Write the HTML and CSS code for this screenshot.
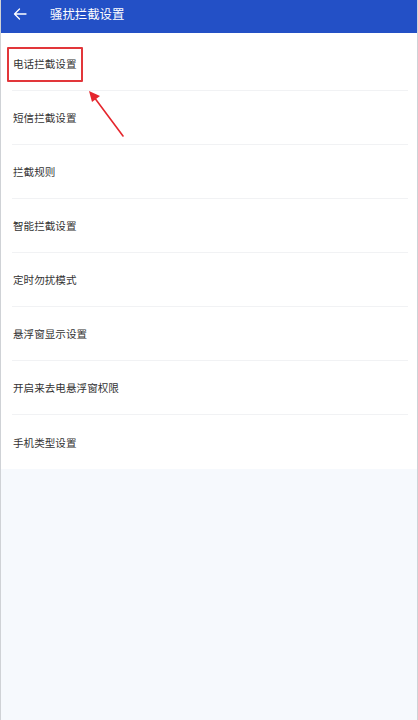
FILE: index.html
```html
<!DOCTYPE html>
<html lang="zh-CN">
<head>
<meta charset="utf-8">
<title>骚扰拦截设置</title>
<link rel="stylesheet" href="styles.css">
</head>
<body>
<div class="app">
  <header class="topbar">
    <svg class="back" width="14" height="12" viewBox="0 0 14 12" aria-hidden="true">
      <path d="M13 6H1.5M6.5 1L1.5 6l5 5" fill="none" stroke="#fff" stroke-width="1.3" stroke-linecap="round" stroke-linejoin="round"/>
    </svg>
    <h1 class="title">骚扰拦截设置</h1>
  </header>
  <ul class="menu">
    <li class="item">电话拦截设置</li>
    <li class="item">短信拦截设置</li>
    <li class="item">拦截规则</li>
    <li class="item">智能拦截设置</li>
    <li class="item">定时勿扰模式</li>
    <li class="item">悬浮窗显示设置</li>
    <li class="item">开启来去电悬浮窗权限</li>
    <li class="item">手机类型设置</li>
  </ul>
  <div class="highlight"></div>
  <svg class="pointer" width="50" height="60" viewBox="0 0 50 60" aria-hidden="true">
    <line x1="40" y1="52" x2="11" y2="13" stroke="#e5262d" stroke-width="1.6" stroke-linecap="round"/>
    <polygon points="6,7 17,12 9,18" fill="#e5262d"/>
  </svg>
</div>
</body>
</html>
```
FILE: styles.css
```css
* { box-sizing: border-box; }
html, body { margin: 0; padding: 0; }
body {
  font-family: "Noto Sans CJK SC", "Noto Sans", sans-serif;
  background: #f6f9fd;
}
.app {
  position: relative;
  width: 418px;
  min-height: 720px;
  background: #f6f9fd;
  border-left: 1px solid #cfd2d6;
  border-right: 1px solid #cfd2d6;
}
.topbar {
  height: 33px;
  background: #2350c6;
  display: flex;
  align-items: center;
  padding-left: 12px;
  gap: 23px;
}
.back { display: block; margin-top: -5px; }
.title {
  margin: 0 0 5px 0;
  font-size: 12.4px;
  font-weight: 400;
  color: #ffffff;
  letter-spacing: 0;
}
.menu {
  list-style: none;
  margin: 0;
  padding: 4px 0 0 0;
  background: #ffffff;
}
.item {
  height: 54px;
  margin: 0 9px 0 11px;
  padding-left: 1px;
  display: flex;
  align-items: center;
  border-bottom: 1px solid #f1f2f4;
  font-size: 10.6px;
  color: #333333;
}
.item:last-child { border-bottom: none; }
.highlight {
  position: absolute;
  left: 6px;
  top: 47px;
  width: 76px;
  height: 35px;
  border: 2px solid #e2363a;
  border-radius: 1px;
}
.pointer {
  position: absolute;
  left: 82px;
  top: 84px;
}
```
